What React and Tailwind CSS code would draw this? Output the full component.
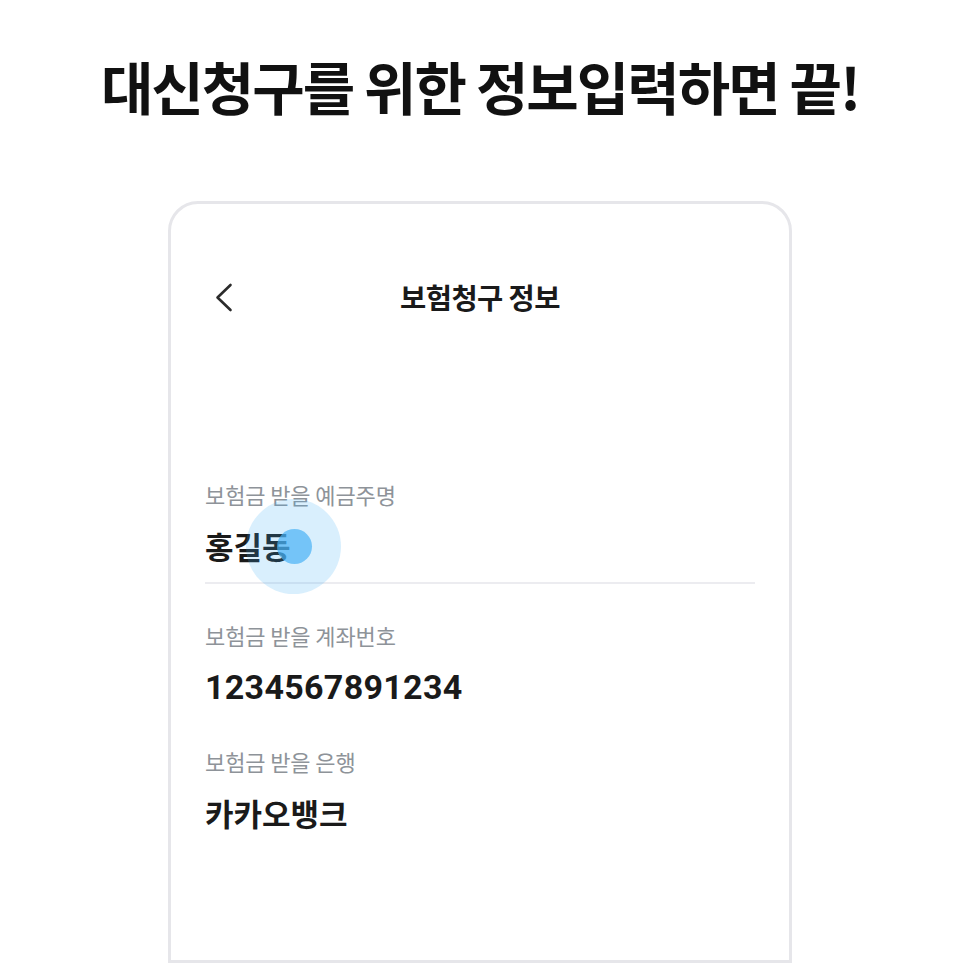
import React from "react";

function Field({ label, value, mono, children }) {
  return (
    <div>
      <p className="text-[22px] leading-[28px] tracking-[-0.005em] text-[#8e9399]">{label}</p>
      <div className="relative mt-[20px]">
        <p
          className={
            mono
              ? "font-['Roboto',sans-serif] text-[34px] font-bold leading-[36px] tracking-[0.3px] text-[#1a1a1a]"
              : "text-[31px] font-bold leading-[36px] text-[#1a1a1a]"
          }
        >
          {value}
        </p>
        {children}
      </div>
    </div>
  );
}

export default function App() {
  return (
    <div className="h-[963px] w-full overflow-hidden bg-white font-['Noto_Sans_CJK_KR',sans-serif]">
      {/* 상단 문구 */}
      <div className="flex h-[201px] justify-center pt-[53px]">
        <h1 className="text-[57px] font-bold leading-[64px] tracking-[-0.035em] text-[#111]">
          대신청구를 위한 정보입력하면 끝!
        </h1>
      </div>

      {/* 폰 화면 카드 */}
      <div className="mx-auto h-[762px] w-[624px] rounded-t-[30px] border-[3px] border-[#e6e6ea]">
        <div className="mt-[66px] grid h-[54px] grid-cols-[1fr_auto_1fr] items-center px-[44px]">
          <svg width="18" height="29" viewBox="0 0 18 29" fill="none">
            <polyline
              points="15.5,2 2.5,14.5 15.5,27"
              stroke="#2b2b2b"
              strokeWidth="2.6"
              strokeLinecap="round"
              strokeLinejoin="round"
            />
          </svg>
          <h2 className="text-[28.5px] font-bold tracking-[-0.02em] text-[#1a1a1a]">보험청구 정보</h2>
          <div />
        </div>

        <div className="mt-[156px] px-[34px]">
          <div className="border-b-2 border-[#ececf0] pb-[18px]">
            <Field label="보험금 받을 예금주명" value="홍길동">
              {/* 터치 표시 */}
              <span className="absolute left-[41px] top-[-29px] h-[95px] w-[95px] rounded-full bg-[#3fb0f7]/20" />
              <span className="absolute left-[72px] top-[1px] h-[35px] w-[35px] rounded-full bg-[#48b2f5]/70" />
            </Field>
          </div>
          <div className="mt-[37px]">
            <Field label="보험금 받을 계좌번호" value="1234567891234" mono />
          </div>
          <div className="mt-[42px]">
            <Field label="보험금 받을 은행" value="카카오뱅크" />
          </div>
        </div>
      </div>
    </div>
  );
}
